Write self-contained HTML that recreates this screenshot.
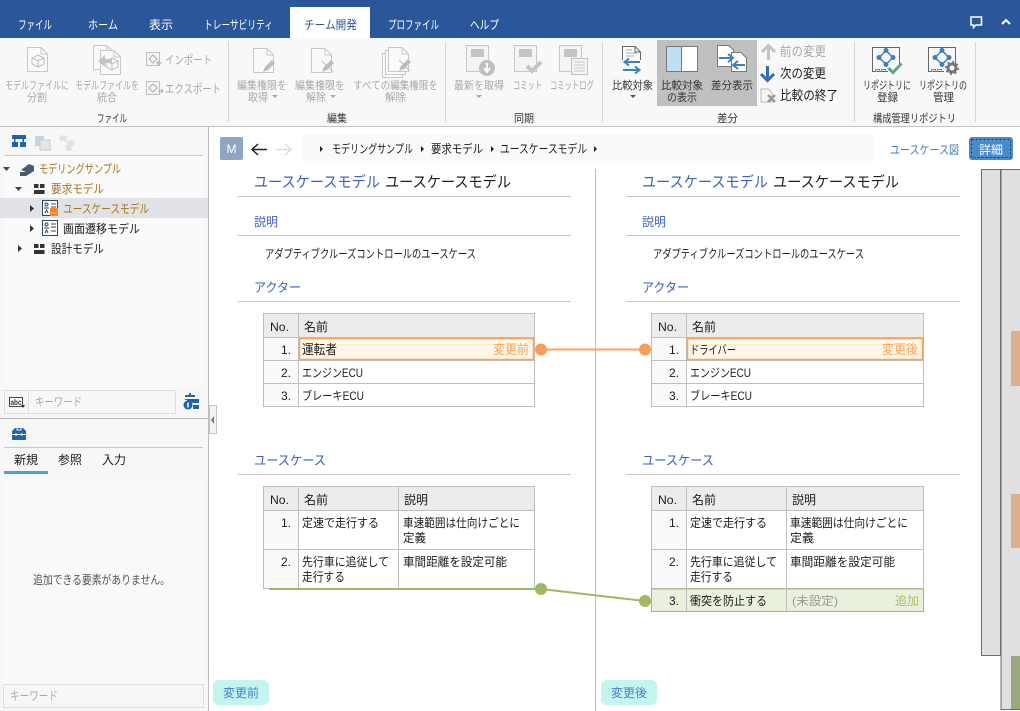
<!DOCTYPE html>
<html lang="ja"><head><meta charset="utf-8"><title>チーム開発</title>
<style>
html,body{margin:0;padding:0;width:1020px;height:711px;overflow:hidden;background:#fff}
svg{display:block}
text{font-family:"Liberation Sans","Noto Sans CJK JP",sans-serif;font-size:12px;fill:#1c1c1c}
.t{fill:#fff}
.g{font-size:11px;fill:#a8a8a8}
.k{font-size:11px;fill:#333}
.l{font-size:11px;fill:#555}
.o{fill:#a8741e}
.b{fill:#3f5fc0}
.h{font-size:15px}
.s{font-size:13px}
.m{font-size:13px;fill:#3f5fc0}
.p{fill:#aaa}
</style></head><body>
<svg xmlns="http://www.w3.org/2000/svg" width="1020" height="711" viewBox="0 0 1020 711">
<defs>
<path id="doc" d="M.5.5H14L20.500 7V24.500H.5ZM14 .5V7H20.500" fill="#fafafa" stroke="#c8c8c8"/>
<path id="cube" d="M6 0 12 3V9L6 12 0 9V3ZM0 3 6 6 12 3M6 6V12" fill="none" stroke="#bcbcbc"/>
<path id="pencil" d="M0 12 2 7 9 0 12 3 5 10Z" fill="#bcbcbc"/>
<g id="note" fill="#f4f4f4" stroke="#c8c8c8"><rect x=".5" y=".5" width="22" height="26"/><rect x="5" y="4" width="13" height="8" fill="#c4c4c4" stroke="none"/></g>
<g id="model" fill="none" stroke="#33475f"><rect x=".5" y=".5" width="15" height="15" fill="#fff"/><circle cx="4.500" cy="4.500" r="1.500"/><path d="M2 8H7M3 13 4.500 10 6 13M9 4H14M9 7H14M9 11H14"/></g>
<g id="repo" fill="none"><path d="M.5 25V.5H27.500V20" stroke="#666"/><path d="M.5 24.500H16" stroke="#666"/><path d="M3.500 25V22.500H7.500V25M9.500 25V22.500H13.500V25" stroke="#888"/><path d="M14 3.500 21 10.500 14 17.500 7 10.500Z" stroke="#3f7fc0" stroke-width="1.500"/><circle cx="14" cy="3.500" r="2.500" fill="#3f7fc0"/><circle cx="14" cy="17.500" r="2.500" fill="#3f7fc0"/><circle cx="7" cy="10.500" r="2.500" fill="#3f7fc0"/><circle cx="21" cy="10.500" r="2.500" fill="#3f7fc0"/></g>
</defs>

<!-- title bar -->
<rect width="1020" height="38" fill="#2b579a"/>
<rect x="290" y="7" width="80" height="31" fill="#fff"/>
<text class="t" x="18" y="29" textLength="34" lengthAdjust="spacingAndGlyphs">ファイル</text>
<text class="t" x="88" y="29" textLength="30" lengthAdjust="spacingAndGlyphs">ホーム</text>
<text class="t" x="149" y="29" textLength="24" lengthAdjust="spacingAndGlyphs">表示</text>
<text class="t" x="204" y="29" textLength="69" lengthAdjust="spacingAndGlyphs">トレーサビリティ</text>
<text x="304" y="29" textLength="53" lengthAdjust="spacingAndGlyphs" style="fill:#2b579a">チーム開発</text>
<text class="t" x="388" y="29" textLength="51" lengthAdjust="spacingAndGlyphs">プロファイル</text>
<text class="t" x="470" y="29" textLength="29" lengthAdjust="spacingAndGlyphs">ヘルプ</text>
<path d="M971 17H981.500V25H976L973.500 27.500V25H971Z" fill="#2b579a" stroke="#fff" stroke-width="1.500"/>
<path d="M1002 24 1006 20 1010 24" fill="none" stroke="#fff" stroke-width="2"/>

<!-- ribbon -->
<rect y="38" width="1020" height="88" fill="#f8f8f8"/>
<rect y="126" width="1020" height="1" fill="#c4c4c4"/>
<g fill="#d6d6d6"><rect x="228" y="42" width="1" height="80"/><rect x="445" y="42" width="1" height="80"/><rect x="602" y="42" width="1" height="80"/><rect x="854" y="42" width="1" height="80"/><rect x="975" y="42" width="1" height="80"/></g>
<rect x="657" y="40" width="100" height="66" fill="#c0c0c0"/>

<!-- group: file -->
<use href="#doc" x="27" y="47"/><use href="#cube" x="32" y="55"/>
<use href="#doc" x="93" y="45"/><use href="#doc" x="100" y="50"/><use href="#cube" x="106" y="58"/>
<path d="M98 61 105 55V59H112V63H105V67Z" fill="#c4c4c4"/>
<rect x="146.500" y="52.500" width="13" height="13" fill="#f4f4f4" stroke="#c0c0c0"/><path d="M149 59 153 55 157 59 153 63ZM157 63H162M159 61 157 63 159 65" fill="none" stroke="#b0b0b0"/>
<rect x="146.500" y="81.500" width="13" height="13" fill="#f4f4f4" stroke="#c0c0c0"/><path d="M149 88 153 84 157 88 153 92ZM158 91H163M161 89 163 91 161 93" fill="none" stroke="#b0b0b0"/>
<use href="#doc" x="253" y="48"/><use href="#pencil" x="263" y="60"/>
<use href="#doc" x="311" y="48"/><use href="#pencil" x="322" y="60"/><path d="M322 61 333 72" stroke="#bcbcbc" fill="none"/>
<use href="#doc" x="382" y="53"/><use href="#doc" x="385" y="50"/><use href="#doc" x="388" y="47"/><use href="#pencil" x="399" y="59"/><path d="M399 60 410 71" stroke="#bcbcbc" fill="none"/>
<text class="g" x="5" y="89" textLength="64" lengthAdjust="spacingAndGlyphs">モデルファイルに</text>
<text class="g" x="27" y="101" textLength="20" lengthAdjust="spacingAndGlyphs">分割</text>
<text class="g" x="75" y="89" textLength="64" lengthAdjust="spacingAndGlyphs">モデルファイルを</text>
<text class="g" x="97" y="101" textLength="20" lengthAdjust="spacingAndGlyphs">統合</text>
<text class="g" x="165" y="64" style="font-size:12px" textLength="47" lengthAdjust="spacingAndGlyphs">インポート</text>
<text class="g" x="165" y="93" style="font-size:12px" textLength="56" lengthAdjust="spacingAndGlyphs">エクスポート</text>
<text class="k" x="97" y="122" textLength="30" lengthAdjust="spacingAndGlyphs">ファイル</text>

<text class="g" x="237" y="89" textLength="50" lengthAdjust="spacingAndGlyphs">編集権限を</text>
<text class="g" x="248" y="101" textLength="20" lengthAdjust="spacingAndGlyphs">取得</text>
<path d="M272 95H278L275 98Z" fill="#a8a8a8"/>
<text class="g" x="295" y="89" textLength="50" lengthAdjust="spacingAndGlyphs">編集権限を</text>
<text class="g" x="306" y="101" textLength="20" lengthAdjust="spacingAndGlyphs">解除</text>
<path d="M330 95H336L333 98Z" fill="#a8a8a8"/>
<text class="g" x="353" y="89" textLength="85" lengthAdjust="spacingAndGlyphs">すべての編集権限を</text>
<text class="g" x="385" y="101" textLength="21" lengthAdjust="spacingAndGlyphs">解除</text>
<text class="k" x="327" y="122" textLength="20" lengthAdjust="spacingAndGlyphs">編集</text>

<!-- group: sync -->
<use href="#note" x="466" y="45"/><circle cx="487" cy="68" r="8" fill="#bfbfbf"/><path d="M487 63V71M484 68 487 72 490 68" stroke="#f8f8f8" stroke-width="2" fill="none"/>
<use href="#note" x="514" y="45"/><path d="M527 66 532 71 541 62" fill="none" stroke="#c4c4c4" stroke-width="4"/>
<use href="#note" x="559" y="45"/><rect x="571.500" y="58.500" width="16" height="16" fill="#f4f4f4" stroke="#c0c0c0"/><path d="M574 62H585M574 65H585M574 68H585M574 71H585" stroke="#c8c8c8"/>
<text class="g" x="454" y="89" textLength="50" lengthAdjust="spacingAndGlyphs">最新を取得</text>
<path d="M476 95H482L479 98Z" fill="#a8a8a8"/>
<text class="g" x="513" y="89" textLength="29" lengthAdjust="spacingAndGlyphs">コミット</text>
<text class="g" x="550" y="89" textLength="44" lengthAdjust="spacingAndGlyphs">コミットログ</text>
<text class="k" x="514" y="122" textLength="20" lengthAdjust="spacingAndGlyphs">同期</text>

<!-- group: diff -->
<path d="M622.500 60V46.500H635L640.500 52V60M635 46.500V52H640.500" fill="#fafafa" stroke="#666"/>
<path d="M626 50H632M626 53H637M626 56H634" stroke="#aaa"/>
<path d="M640 62H625M629 58.500 624.500 62 629 65.500" fill="none" stroke="#3f7fc0" stroke-width="2"/>
<path d="M623 70H639M635 66.500 639.500 70 635 73.500" fill="none" stroke="#3f7fc0" stroke-width="2"/>
<text class="k" x="612" y="89" textLength="41" lengthAdjust="spacingAndGlyphs">比較対象</text>
<path d="M630 95H636L633 98Z" fill="#555"/>
<rect x="666.500" y="46.500" width="31" height="25" fill="#fff" stroke="#777"/><rect x="667" y="47" width="15" height="24" fill="#bfdff2"/><path d="M681.500 47V71" stroke="#777"/>
<text class="k" x="661" y="89" textLength="42" lengthAdjust="spacingAndGlyphs">比較対象</text>
<text class="k" x="667" y="101" textLength="30" lengthAdjust="spacingAndGlyphs">の表示</text>
<path d="M717.500 45.500H729L733.500 50V66.500H717.500Z" fill="#fff" stroke="#777"/>
<path d="M731.500 52.500H741L746.500 58V71.500H731.500Z" fill="#fff" stroke="#777"/>
<path d="M719 58H732M728 54 733 58 728 62" fill="none" stroke="#3f7fc0" stroke-width="2"/>
<path d="M745 65H734M738 61 733 65 738 69" fill="none" stroke="#3f7fc0" stroke-width="2"/>
<text class="k" x="711" y="89" textLength="42" lengthAdjust="spacingAndGlyphs">差分表示</text>
<path d="M768.500 60V46M762 52 768.500 45.500 775 52" fill="none" stroke="#c4c4c4" stroke-width="3"/>
<path d="M767.500 66V80M761 74 767.500 80.500 774 74" fill="none" stroke="#2f6fb4" stroke-width="3"/>
<path d="M761 89H768L772 93V102H761Z" fill="#f6f6f6" stroke="#bbb"/><path d="M768 95 775 102M775 95 768 102" stroke="#999" stroke-width="2.500"/>
<text x="780" y="56" class="s" textLength="46" lengthAdjust="spacingAndGlyphs" style="fill:#a8a8a8">前の変更</text>
<text x="780" y="78" class="s" textLength="46" lengthAdjust="spacingAndGlyphs">次の変更</text>
<text x="780" y="100" class="s" textLength="58" lengthAdjust="spacingAndGlyphs">比較の終了</text>
<text class="k" x="717" y="122" textLength="21" lengthAdjust="spacingAndGlyphs">差分</text>

<!-- group: repo -->
<use href="#repo" x="872" y="47"/>
<path d="M888.500 68 893 72.500 901.500 63.500" fill="none" stroke="#5fa586" stroke-width="3"/>
<use href="#repo" x="928" y="47"/>
<circle cx="952" cy="68" r="4" fill="none" stroke="#777" stroke-width="3"/>
<circle cx="952" cy="68" r="6" fill="none" stroke="#777" stroke-width="2" stroke-dasharray="2 2.700"/>
<text class="k" x="863" y="89" textLength="48" lengthAdjust="spacingAndGlyphs">リポジトリに</text>
<text class="k" x="877" y="101" textLength="21" lengthAdjust="spacingAndGlyphs">登録</text>
<text class="k" x="919" y="89" textLength="48" lengthAdjust="spacingAndGlyphs">リポジトリの</text>
<text class="k" x="933" y="101" textLength="21" lengthAdjust="spacingAndGlyphs">管理</text>
<text class="k" x="873" y="122" textLength="83" lengthAdjust="spacingAndGlyphs">構成管理リポジトリ</text>

<!-- left pane -->
<rect y="127" width="208" height="584" fill="#f7f7f7"/>
<rect x="208" y="127" width="1" height="584" fill="#bdbdbd"/>
<rect x="4" y="156" width="200" height="230" fill="#fafafa"/>
<rect x="4" y="155" width="199" height="1" fill="#c8c8c8"/>
<path d="M12 135H26V139H12ZM14 139H15.500V142H14ZM22.500 139H24V142H22.500ZM12 142H18V147H12ZM20 142H26V147H20Z" fill="#1f63a8"/>
<rect x="35" y="136" width="9" height="10" fill="#c9d3de"/><rect x="40" y="140" width="10" height="10" fill="#e2e7ec" stroke="#c2ccd6"/>
<path d="M60 136H66V140H60ZM68 141H74V145H68ZM66 146H71V150H66ZM63 140 68 144" fill="#d8e3ec" stroke="#d8e3ec"/>

<path d="M3 167H10L6.500 171Z" fill="#444"/>
<path d="M15 187H22L18.500 191Z" fill="#444"/>
<path d="M18 245V252L22 248.500Z" fill="#333"/>
<path d="M21 170 29 164 34 166V171L26 176V172ZM20 172H26V176H20Z" fill="#4a5b6d"/>
<path d="M34 184H38.500V188H34ZM40 184H44.500V188H40ZM34 190H44.500V194H34Z" fill="#333"/>
<path d="M34 244H38.500V248H34ZM40 244H44.500V248H40ZM34 250H44.500V254H34Z" fill="#333"/>
<rect y="198" width="208" height="20" fill="#e1e2e6"/>
<path d="M30 205V212L34 208.500Z M30 225V232L34 228.500Z" fill="#333"/>
<use href="#model" x="42" y="200"/><rect x="50" y="208" width="8" height="8" fill="#f08a24"/><path d="M51.500 213H56.500" stroke="#fff" stroke-dasharray="1 1"/>
<use href="#model" x="42" y="220"/>
<text class="o" x="39" y="173" textLength="82" lengthAdjust="spacingAndGlyphs">モデリングサンプル</text>
<text class="o" x="51" y="193" textLength="53" lengthAdjust="spacingAndGlyphs">要求モデル</text>
<text class="o" x="63" y="213" textLength="86" lengthAdjust="spacingAndGlyphs">ユースケースモデル</text>
<text x="63" y="233" textLength="77" lengthAdjust="spacingAndGlyphs">画面遷移モデル</text>
<text x="51" y="253" textLength="53" lengthAdjust="spacingAndGlyphs">設計モデル</text>

<rect x="4.500" y="390.500" width="171" height="23" fill="#f7f7f7" stroke="#ddd"/>
<rect x="28" y="391" width="1" height="22" fill="#ddd"/>
<rect x="9.500" y="397.500" width="13" height="9" fill="#fff" stroke="#444"/><text x="10.500" y="405" textLength="11" lengthAdjust="spacingAndGlyphs" style="font-size:8px;font-weight:bold;fill:#333">abc</text><path d="M21 405H25L23 408Z" fill="#333"/>
<text x="35" y="406" class="p" textLength="47" lengthAdjust="spacingAndGlyphs">キーワード</text>
<path d="M189 393H191V395H195V397H185V395H189ZM184 399H199V403H193ZM193 405H199V409H193Z" fill="#1f63a8"/><circle cx="188" cy="405" r="4.500" fill="#1f63a8"/><path d="M188 402.500V407.500" stroke="#fff" stroke-width="1.500"/>
<rect y="418" width="208" height="1" fill="#bbb"/>
<path d="M12 431 15 428H23L26 431V434H12ZM12 435H26V440H12Z" fill="#1f63a8"/><path d="M17 428V430H21V428" stroke="#f7f7f7" fill="none"/><path d="M16 433V436M22 433V436" stroke="#f7f7f7"/>
<rect x="4" y="447" width="199" height="1" fill="#c8c8c8"/>
<text x="14" y="464" textLength="24" lengthAdjust="spacingAndGlyphs">新規</text>
<text x="58" y="464" textLength="24" lengthAdjust="spacingAndGlyphs">参照</text>
<text x="102" y="464" textLength="24" lengthAdjust="spacingAndGlyphs">入力</text>
<rect x="4" y="471" width="44" height="3" fill="#4aa3d8"/>
<rect x="3" y="478" width="201" height="206" fill="#f9f9f9"/>
<text x="33" y="584" class="l" style="font-size:12px" textLength="137" lengthAdjust="spacingAndGlyphs">追加できる要素がありません。</text>
<rect x="3.500" y="684.500" width="200" height="23" fill="#f7f7f7" stroke="#ddd"/>
<text x="10" y="700" class="p" textLength="48" lengthAdjust="spacingAndGlyphs">キーワード</text>

<rect x="209.500" y="405.500" width="7" height="28" fill="#f3f3f3" stroke="#c4c4c4"/>
<path d="M214 416V424L211 420Z" fill="#777"/>

<!-- main header -->
<rect x="220" y="137" width="23" height="23" rx="2" fill="#8fa5c4"/>
<text x="231.500" y="153" text-anchor="middle" style="fill:#fff;font-size:12px">M</text>
<path d="M267 149.500H252M258 144 252 149.500 258 155" fill="none" stroke="#222" stroke-width="1.500"/>
<path d="M276 149.500H291M285 144 291 149.500 285 155" fill="none" stroke="#ddd" stroke-width="1.500"/>
<rect x="302" y="134" width="571" height="30" rx="4" fill="#fafafa"/>
<path d="M320 146V152L323 149ZM421 146V152L424 149ZM491 146V152L494 149ZM594 146V152L597 149Z" fill="#222"/>
<text x="332" y="153" textLength="81" lengthAdjust="spacingAndGlyphs">モデリングサンプル</text>
<text x="431" y="153" textLength="52" lengthAdjust="spacingAndGlyphs">要求モデル</text>
<text x="500" y="153" textLength="87" lengthAdjust="spacingAndGlyphs">ユースケースモデル</text>
<text x="890" y="154" textLength="69" lengthAdjust="spacingAndGlyphs" style="fill:#3f7fbf">ユースケース図</text>
<rect x="969" y="137" width="44" height="23" rx="3" fill="#4a8ac8"/>
<rect x="971.500" y="139.500" width="39" height="18" fill="none" stroke="#1d3c63" stroke-dasharray="2 2"/>
<text x="979" y="154" class="t" textLength="24" lengthAdjust="spacingAndGlyphs">詳細</text>

<!-- center divider -->
<rect x="595" y="169" width="1" height="542" fill="#bdbdbd"/>

<!-- left doc -->
<text class="h" x="254" y="187" textLength="126" lengthAdjust="spacingAndGlyphs" style="fill:#3f5fc0">ユースケースモデル</text>
<text class="h" x="385" y="187" textLength="126" lengthAdjust="spacingAndGlyphs">ユースケースモデル</text>
<g fill="#c4c4c4"><rect x="238" y="196" width="333" height="1"/><rect x="238" y="235" width="333" height="1"/><rect x="238" y="301" width="333" height="1"/><rect x="238" y="474" width="333" height="1"/></g>
<text class="b" x="254" y="226" textLength="24" lengthAdjust="spacingAndGlyphs">説明</text>
<text x="265" y="258" textLength="211" lengthAdjust="spacingAndGlyphs">アダプティブクルーズコントロールのユースケース</text>
<text class="m" x="254" y="292" textLength="47" lengthAdjust="spacingAndGlyphs">アクター</text>
<text class="m" x="254" y="465" textLength="72" lengthAdjust="spacingAndGlyphs">ユースケース</text>

<!-- right doc -->
<text class="h" x="642" y="187" textLength="126" lengthAdjust="spacingAndGlyphs" style="fill:#3f5fc0">ユースケースモデル</text>
<text class="h" x="773" y="187" textLength="126" lengthAdjust="spacingAndGlyphs">ユースケースモデル</text>
<g fill="#c4c4c4"><rect x="626" y="196" width="334" height="1"/><rect x="626" y="235" width="334" height="1"/><rect x="626" y="301" width="334" height="1"/><rect x="626" y="474" width="334" height="1"/></g>
<text class="b" x="642" y="226" textLength="24" lengthAdjust="spacingAndGlyphs">説明</text>
<text x="653" y="258" textLength="211" lengthAdjust="spacingAndGlyphs">アダプティブクルーズコントロールのユースケース</text>
<text class="m" x="642" y="292" textLength="47" lengthAdjust="spacingAndGlyphs">アクター</text>
<text class="m" x="642" y="465" textLength="72" lengthAdjust="spacingAndGlyphs">ユースケース</text>

<!-- actor table left -->
<g fill="none" stroke="#bfbfbf">
<rect x="263.500" y="313.500" width="271" height="24" fill="#ececec"/>
<rect x="263.500" y="337.500" width="35" height="69" fill="#f9f9f9"/>
<rect x="298.500" y="337.500" width="236" height="69" fill="#fff"/>
<path d="M298.500 313.500V406.500M263.500 360.500H534.500M263.500 383.500H534.500"/>
</g>
<rect x="299.500" y="338.500" width="234" height="21" fill="#fff7e6" stroke="#f5a55c" stroke-width="1.500"/>
<text x="270" y="331" textLength="19" lengthAdjust="spacingAndGlyphs">No.</text>
<text x="304" y="331" textLength="24" lengthAdjust="spacingAndGlyphs">名前</text>
<text x="281" y="354" textLength="10" lengthAdjust="spacingAndGlyphs">1.</text>
<text x="281" y="377" textLength="10" lengthAdjust="spacingAndGlyphs">2.</text>
<text x="281" y="400" textLength="10" lengthAdjust="spacingAndGlyphs">3.</text>
<text x="302" y="354" class="s" textLength="35" lengthAdjust="spacingAndGlyphs">運転者</text>
<text x="493" y="354" class="s" textLength="36" lengthAdjust="spacingAndGlyphs" style="fill:#f5a55c">変更前</text>
<text x="302" y="377" textLength="61" lengthAdjust="spacingAndGlyphs">エンジンECU</text>
<text x="302" y="400" textLength="62" lengthAdjust="spacingAndGlyphs">ブレーキECU</text>

<!-- actor table right -->
<g fill="none" stroke="#bfbfbf">
<rect x="651.500" y="313.500" width="272" height="24" fill="#ececec"/>
<rect x="651.500" y="337.500" width="35" height="69" fill="#f9f9f9"/>
<rect x="686.500" y="337.500" width="237" height="69" fill="#fff"/>
<path d="M686.500 313.500V406.500M651.500 360.500H923.500M651.500 383.500H923.500"/>
</g>
<rect x="687.500" y="338.500" width="235" height="21" fill="#fff7e6" stroke="#f5a55c" stroke-width="1.500"/>
<text x="658" y="331" textLength="19" lengthAdjust="spacingAndGlyphs">No.</text>
<text x="692" y="331" textLength="24" lengthAdjust="spacingAndGlyphs">名前</text>
<text x="669" y="354" textLength="10" lengthAdjust="spacingAndGlyphs">1.</text>
<text x="669" y="377" textLength="10" lengthAdjust="spacingAndGlyphs">2.</text>
<text x="669" y="400" textLength="10" lengthAdjust="spacingAndGlyphs">3.</text>
<text x="690" y="354" textLength="46" lengthAdjust="spacingAndGlyphs">ドライバー</text>
<text x="882" y="354" class="s" textLength="36" lengthAdjust="spacingAndGlyphs" style="fill:#f5a55c">変更後</text>
<text x="690" y="377" textLength="61" lengthAdjust="spacingAndGlyphs">エンジンECU</text>
<text x="690" y="400" textLength="62" lengthAdjust="spacingAndGlyphs">ブレーキECU</text>

<!-- usecase table left -->
<g fill="none" stroke="#bfbfbf">
<rect x="263.500" y="486.500" width="271" height="24" fill="#ececec"/>
<rect x="263.500" y="510.500" width="35" height="78" fill="#f9f9f9"/>
<rect x="298.500" y="510.500" width="236" height="78" fill="#fff"/>
<path d="M298.500 486.500V588.500M398.500 486.500V588.500M263.500 549.500H534.500"/>
</g>
<text x="270" y="504" textLength="19" lengthAdjust="spacingAndGlyphs">No.</text>
<text x="304" y="504" textLength="24" lengthAdjust="spacingAndGlyphs">名前</text>
<text x="404" y="504" textLength="24" lengthAdjust="spacingAndGlyphs">説明</text>
<text x="281" y="527" textLength="10" lengthAdjust="spacingAndGlyphs">1.</text>
<text x="281" y="566" textLength="10" lengthAdjust="spacingAndGlyphs">2.</text>
<text x="302" y="527" textLength="77" lengthAdjust="spacingAndGlyphs">定速で走行する</text>
<text x="403" y="527" textLength="117" lengthAdjust="spacingAndGlyphs">車速範囲は仕向けごとに</text>
<text x="403" y="542" textLength="23" lengthAdjust="spacingAndGlyphs">定義</text>
<text x="302" y="566" textLength="87" lengthAdjust="spacingAndGlyphs">先行車に追従して</text>
<text x="302" y="581" textLength="43" lengthAdjust="spacingAndGlyphs">走行する</text>
<text x="403" y="566" textLength="104" lengthAdjust="spacingAndGlyphs">車間距離を設定可能</text>

<!-- usecase table right -->
<g fill="none" stroke="#bfbfbf">
<rect x="651.500" y="486.500" width="272" height="24" fill="#ececec"/>
<rect x="651.500" y="510.500" width="35" height="78" fill="#f9f9f9"/>
<rect x="686.500" y="510.500" width="237" height="78" fill="#fff"/>
<path d="M686.500 486.500V588.500M786.500 486.500V588.500M651.500 549.500H923.500"/>
</g>
<rect x="651.500" y="589" width="272" height="22.500" fill="#e8f0de" stroke="#a5bb6c"/>
<path d="M686.500 589V611M786.500 589V611" stroke="#bfbfbf"/>
<text x="658" y="504" textLength="19" lengthAdjust="spacingAndGlyphs">No.</text>
<text x="692" y="504" textLength="24" lengthAdjust="spacingAndGlyphs">名前</text>
<text x="792" y="504" textLength="24" lengthAdjust="spacingAndGlyphs">説明</text>
<text x="669" y="527" textLength="10" lengthAdjust="spacingAndGlyphs">1.</text>
<text x="669" y="566" textLength="10" lengthAdjust="spacingAndGlyphs">2.</text>
<text x="669" y="605" textLength="10" lengthAdjust="spacingAndGlyphs">3.</text>
<text x="690" y="527" textLength="77" lengthAdjust="spacingAndGlyphs">定速で走行する</text>
<text x="790" y="527" textLength="118" lengthAdjust="spacingAndGlyphs">車速範囲は仕向けごとに</text>
<text x="790" y="542" textLength="24" lengthAdjust="spacingAndGlyphs">定義</text>
<text x="690" y="566" textLength="87" lengthAdjust="spacingAndGlyphs">先行車に追従して</text>
<text x="690" y="581" textLength="43" lengthAdjust="spacingAndGlyphs">走行する</text>
<text x="790" y="566" textLength="105" lengthAdjust="spacingAndGlyphs">車間距離を設定可能</text>
<text x="690" y="605" textLength="77" lengthAdjust="spacingAndGlyphs">衝突を防止する</text>
<text x="792" y="605" textLength="46" lengthAdjust="spacingAndGlyphs" style="fill:#999">(未設定)</text>
<text x="895" y="605" textLength="24" lengthAdjust="spacingAndGlyphs" style="fill:#a8c060">追加</text>

<!-- connectors -->
<path d="M541 349.500H645" stroke="#f5a55c" stroke-width="2"/>
<circle cx="541" cy="349.500" r="6" fill="#f5a05a"/><circle cx="645" cy="349.500" r="6" fill="#f5a05a"/>
<path d="M269 589H541L645 601" fill="none" stroke="#a0b860" stroke-width="2"/>
<circle cx="541" cy="589" r="6" fill="#a0b860"/><circle cx="645" cy="601" r="6" fill="#a0b860"/>

<!-- badges -->
<rect x="213" y="680" width="56" height="25" rx="6" fill="#c4f4ee"/>
<text x="223" y="697" textLength="36" lengthAdjust="spacingAndGlyphs" style="fill:#4a7fd0">変更前</text>
<rect x="601" y="680" width="56" height="25" rx="6" fill="#c4f4ee"/>
<text x="611" y="697" textLength="36" lengthAdjust="spacingAndGlyphs" style="fill:#4a7fd0">変更後</text>

<!-- minimap -->
<rect x="981.500" y="169.500" width="19" height="486" fill="#e0e0e0" stroke="#6b6b6b"/>
<rect x="1001" y="169.500" width="22" height="540" fill="#e0e0e0" stroke="#6b6b6b"/>
<rect x="1011" y="331" width="9" height="55" fill="#dcb08c"/>
<rect x="1011" y="494" width="9" height="54" fill="#dcb08c"/>
<rect x="1011" y="656" width="9" height="53" fill="#9ba97f"/>
</svg>
</body></html>
